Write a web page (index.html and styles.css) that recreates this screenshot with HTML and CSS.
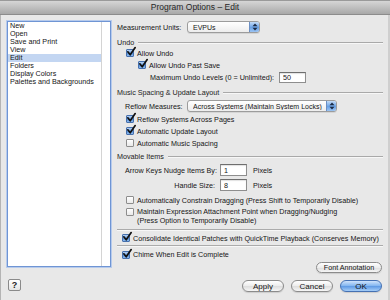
FILE: index.html
```html
<!DOCTYPE html>
<html lang="en">
<head>
    <meta charset="UTF-8">
    <title>Program Options - Edit</title>
    <link rel="stylesheet" href="styles.css">
</head>
<body>
    <div class="window">
        <div class="titlebar">Program Options – Edit</div>
        <div class="dialog">
            <div class="pane-list">
                <ul class="pane-items">
                    <li>New</li>
                    <li>Open</li>
                    <li>Save and Print</li>
                    <li>View</li>
                    <li class="selected">Edit</li>
                    <li>Folders</li>
                    <li>Display Colors</li>
                    <li>Palettes and Backgrounds</li>
                </ul>
            </div>
            <div class="options">
                <div class="row popup-row">
                    <span class="popup-label units-label">Measurement Units:</span>
                    <div class="popup units-popup">
                        <span class="popup-text">EVPUs</span>
                        <span class="stepper"><svg width="6" height="8" viewBox="0 0 6 8"><path d="M3 0.5 L5.5 3.2 H0.5Z M3 7.5 L5.5 4.8 H0.5Z" fill="#1b2a44"/></svg></span>
                    </div>
                </div>

                <div class="group-head"><span>Undo</span><span class="rule"></span></div>
                <div class="row check-row indent">
                    <span class="box checked"><svg viewBox="0 0 10 10"><path d="M1.8 4.8 L4.2 7.8 L9.2 0.6" /></svg></span>
                    <span>Allow Undo</span>
                </div>
                <div class="row check-row indent2">
                    <span class="box checked"><svg viewBox="0 0 10 10"><path d="M1.8 4.8 L4.2 7.8 L9.2 0.6" /></svg></span>
                    <span>Allow Undo Past Save</span>
                </div>
                <div class="row field-row indent3">
                    <span>Maximum Undo Levels (0 = Unlimited):</span>
                    <input class="num-input undo-input" type="text" value="50">
                </div>

                <div class="group-head"><span>Music Spacing &amp; Update Layout</span><span class="rule"></span></div>
                <div class="row popup-row reflow-row">
                    <span class="popup-label reflow-label">Reflow Measures:</span>
                    <div class="popup reflow-popup">
                        <span class="popup-text">Across Systems (Maintain System Locks)</span>
                        <span class="stepper"><svg width="6" height="8" viewBox="0 0 6 8"><path d="M3 0.5 L5.5 3.2 H0.5Z M3 7.5 L5.5 4.8 H0.5Z" fill="#1b2a44"/></svg></span>
                    </div>
                </div>
                <div class="row check-row indent first-check">
                    <span class="box checked"><svg viewBox="0 0 10 10"><path d="M1.8 4.8 L4.2 7.8 L9.2 0.6" /></svg></span>
                    <span>Reflow Systems Across Pages</span>
                </div>
                <div class="row check-row indent">
                    <span class="box checked"><svg viewBox="0 0 10 10"><path d="M1.8 4.8 L4.2 7.8 L9.2 0.6" /></svg></span>
                    <span>Automatic Update Layout</span>
                </div>
                <div class="row check-row indent">
                    <span class="box"></span>
                    <span>Automatic Music Spacing</span>
                </div>

                <div class="group-head head-movable"><span>Movable Items</span><span class="rule"></span></div>
                <div class="row field-row nudge-row">
                    <span class="nudge-label">Arrow Keys Nudge Items By:</span>
                    <input class="num-input" type="text" value="1">
                    <span class="unit">Pixels</span>
                </div>
                <div class="row field-row nudge-row">
                    <span class="nudge-label">Handle Size:</span>
                    <input class="num-input" type="text" value="8">
                    <span class="unit">Pixels</span>
                </div>
                <div class="row check-row indent constrain-row">
                    <span class="box"></span>
                    <span>Automatically Constrain Dragging (Press Shift to Temporarily Disable)</span>
                </div>
                <div class="row check-row indent two-line">
                    <span class="box"></span>
                    <span>Maintain Expression Attachment Point when Dragging/Nudging<br>(Press Option to Temporarily Disable)</span>
                </div>

                <div class="separator"></div>
                <div class="row check-row wide-row outdent">
                    <span class="box checked"><svg viewBox="0 0 10 10"><path d="M1.8 4.8 L4.2 7.8 L9.2 0.6" /></svg></span>
                    <span>Consolidate Identical Patches with QuickTime Playback (Conserves Memory)</span>
                </div>
                <div class="separator tight"></div>
                <div class="row check-row chime-row outdent">
                    <span class="box checked"><svg viewBox="0 0 10 10"><path d="M1.8 4.8 L4.2 7.8 L9.2 0.6" /></svg></span>
                    <span>Chime When Edit is Complete</span>
                </div>
                <button class="btn small-btn">Font Annotation</button>
            </div>
        </div>
        <div class="footer">
            <button class="help-btn">?</button>
            <div class="actions">
                <button class="btn">Apply</button>
                <button class="btn">Cancel</button>
                <button class="btn default-btn">OK</button>
            </div>
        </div>
    </div>
</body>
</html>
```

FILE: styles.css
```css
* {
    box-sizing: border-box;
}
body {
    margin: 0;
    width: 390px;
    height: 300px;
    overflow: hidden;
    background-color: #e8e8e8;
    font-family: 'Liberation Sans', Arial, sans-serif;
    font-size: 7.2px;
    color: #151515;
}
.window {
    height: 300px;
    box-shadow: inset 1px 0 #b4b4b4, inset -2px 0 #cfcfcf;
}
.titlebar {
    height: 15px;
    background: linear-gradient(#d6d6d6, #a8a8a8);
    border-top: 1px solid #9a9a9a;
    border-bottom: 1px solid #8c8c8c;
    text-align: center;
    font-size: 8.5px;
    line-height: 13px;
    color: #262626;
}
.dialog {
    display: flex;
    height: 260px;
    padding: 6px 0 0 7px;
}
.pane-list {
    width: 104px;
    height: 246px;
    background-color: #fff;
    border: 1px solid #6f95d4;
    box-shadow: 0 0 0 1px #b7cbec;
}
.pane-items {
    list-style: none;
    margin: 0;
    padding: 0;
    width: 94px;
    height: 100%;
    border-right: 1px solid #d4d4d4;
}
.pane-items li {
    height: 8px;
    line-height: 8px;
    padding-left: 2px;
    white-space: nowrap;
}
.pane-items li.selected {
    background-color: #c3d6f2;
}
.options {
    display: flex;
    flex-direction: column;
    width: 266px;
    margin-left: 6px;
}
.row {
    display: flex;
    align-items: center;
    white-space: nowrap;
}
.popup-row {
    height: 12px;
}
.popup-label {
    flex: none;
}
.units-label {
    width: 70px;
}
.reflow-row {
    margin-top: 3px;
    padding-left: 8px;
}
.reflow-label {
    width: 62px;
}
.popup {
    display: flex;
    align-items: center;
    height: 12px;
    padding-left: 5px;
    background: linear-gradient(#ffffff, #ededed);
    border: 1px solid #9c9c9c;
    border-radius: 3px;
    box-shadow: 0 1px 0 rgba(0,0,0,0.08);
}
.popup-text {
    overflow: hidden;
    font-size: 7px;
}
.units-popup {
    width: 73px;
}
.reflow-popup {
    width: 150px;
}
.stepper {
    display: flex;
    flex: none;
    justify-content: center;
    align-items: center;
    width: 10px;
    height: 10px;
    margin-left: auto;
    background: linear-gradient(#c4dcf8, #6aa2e6 55%, #9cc4f2);
    border-left: 1px solid #6b8fc4;
    border-radius: 0 2px 2px 0;
}
.group-head {
    display: flex;
    align-items: center;
    height: 9px;
    margin-top: 5px;
    color: #222;
}
.head-movable {
    margin-top: 3px;
}
.rule {
    flex: 1;
    height: 2px;
    margin-left: 4px;
    border-top: 1px solid #a9a9a9;
    border-bottom: 1px solid #f7f7f7;
}
.check-row {
    height: 12px;
}
.indent {
    padding-left: 9px;
}
.indent2 {
    padding-left: 21px;
}
.indent3 {
    padding-left: 33px;
}
.outdent {
    padding-left: 5px;
}
.first-check {
    margin-top: 1px;
}
.box {
    position: relative;
    flex: none;
    width: 8px;
    height: 8px;
    margin-right: 3px;
    background: linear-gradient(#ffffff, #e9e9e9);
    border: 1px solid #8d8d8d;
    border-radius: 1px;
}
.box.checked {
    background: linear-gradient(#b6d2f4, #5b95dc 60%, #8cbaf0);
    border-color: #4670ad;
}
.box svg {
    position: absolute;
    left: -1px;
    top: -3px;
    width: 10px;
    height: 10px;
    overflow: visible;
}
.box svg path {
    fill: none;
    stroke: #101010;
    stroke-width: 1.7;
    stroke-linecap: round;
    stroke-linejoin: round;
}
.field-row {
    height: 12px;
}
.num-input {
    width: 27px;
    height: 12px;
    margin: 0 0 0 5px;
    padding: 0 0 0 3px;
    font-family: inherit;
    font-size: 7.2px;
    color: #151515;
    background-color: #fff;
    border: 1px solid #8e8e8e;
    border-top-color: #6e6e6e;
    box-shadow: inset 0 1px 1px rgba(0,0,0,0.12);
    outline: none;
}
.undo-input {
    height: 11px;
}
.nudge-row {
    margin-top: 3px;
    padding-left: 8px;
}
.nudge-label {
    width: 90px;
    text-align: right;
}
.unit {
    margin-left: 6px;
}
.constrain-row {
    margin-top: 3px;
}
.two-line {
    align-items: flex-start;
    height: 19px;
    line-height: 9px;
    padding-top: 1px;
}
.two-line .box {
    margin-top: 0.5px;
}
.separator {
    height: 2px;
    margin-top: 4px;
    border-top: 1px solid #ababab;
    border-bottom: 1px solid #f7f7f7;
}
.separator.tight {
    margin-top: 0;
}
.wide-row {
    height: 14px;
}
.chime-row {
    height: 15px;
}
.btn {
    height: 12px;
    width: 42px;
    padding: 0;
    font-family: inherit;
    font-size: 8px;
    color: #151515;
    background: linear-gradient(#ffffff, #ececec 50%, #dcdcdc 51%, #f6f6f6);
    border: 1px solid #8b8b8b;
    border-radius: 6px;
    box-shadow: 0 1px 1px rgba(0,0,0,0.12);
}
.small-btn {
    align-self: flex-end;
    width: 66px;
    height: 11px;
    margin-right: 1px;
    font-size: 7.2px;
}
.default-btn {
    background: linear-gradient(#cfe3fb, #80b4f0 50%, #5c98e4 51%, #a5cdf7);
    border-color: #4571b3;
}
.footer {
    display: flex;
    align-items: flex-start;
    height: 25px;
    padding: 4px 8px 0 8px;
}
.help-btn {
    width: 13px;
    height: 12px;
    padding: 0;
    font-family: inherit;
    font-size: 9px;
    font-weight: bold;
    line-height: 10px;
    color: #222;
    background: linear-gradient(#ffffff, #e4e4e4);
    border: 1px solid #8a8a8a;
    border-radius: 2px;
}
.actions {
    display: flex;
    gap: 7px;
    margin-left: auto;
    margin-top: 1px;
}
```
